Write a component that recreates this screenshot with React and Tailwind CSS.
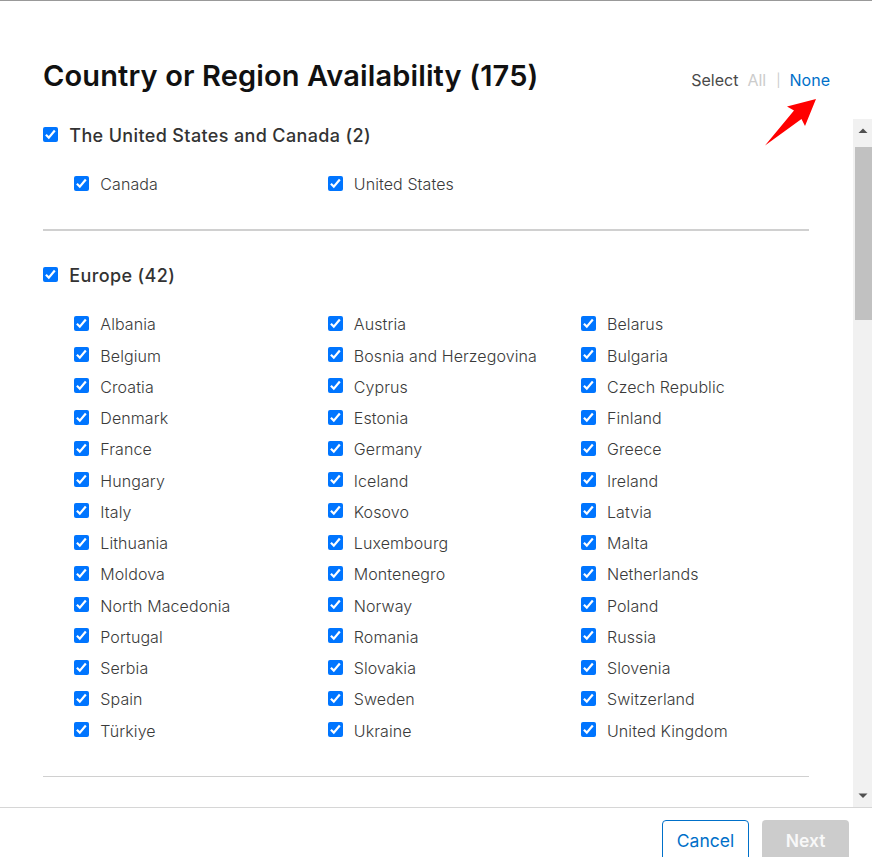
import React from 'react'

const regions = [
  { name: 'The United States and Canada', countries: ['Canada', 'United States'] },
  {
    name: 'Europe',
    countries: [
      'Albania', 'Austria', 'Belarus',
      'Belgium', 'Bosnia and Herzegovina', 'Bulgaria',
      'Croatia', 'Cyprus', 'Czech Republic',
      'Denmark', 'Estonia', 'Finland',
      'France', 'Germany', 'Greece',
      'Hungary', 'Iceland', 'Ireland',
      'Italy', 'Kosovo', 'Latvia',
      'Lithuania', 'Luxembourg', 'Malta',
      'Moldova', 'Montenegro', 'Netherlands',
      'North Macedonia', 'Norway', 'Poland',
      'Portugal', 'Romania', 'Russia',
      'Serbia', 'Slovakia', 'Slovenia',
      'Spain', 'Sweden', 'Switzerland',
      'Türkiye', 'Ukraine', 'United Kingdom',
    ],
  },
]

const Checkbox = () => (
  <svg className="size-[15px] shrink-0" viewBox="0 0 15 15" role="checkbox" aria-checked="true">
    <rect width="15" height="15" rx="2" fill="#0075ff" />
    <path d="M2.9 7.8 5.8 10.6 11.8 3.5" fill="none" stroke="#fff" strokeWidth="2.2" />
  </svg>
)

const Region = ({ name, countries }) => (
  <section className="mb-[28px] border-b border-[#d0d0d0] pb-[30.2px] first:border-b-2">
    <h2 className="flex h-[31px] items-center gap-[11.3px] text-[18px] font-medium tracking-[0.36px] text-[#333]">
      <Checkbox />
      <span className="relative top-px">
        {name} ({countries.length})
      </span>
    </h2>
    <ul className="mt-[17.6px] grid auto-rows-[31.28px] grid-cols-[253.5px_253.2px_1fr] pl-[31px]">
      {countries.map((country) => (
        <li key={country} className="flex items-center gap-[11.3px] text-[16px] font-light tracking-[0.09px] whitespace-nowrap text-[#3a3a3a]">
          <Checkbox />
          <span className="relative top-px">{country}</span>
        </li>
      ))}
    </ul>
  </section>
)

const Scrollbar = () => (
  <div className="flex w-[19px] shrink-0 flex-col items-center bg-[#f1f1f1]">
    <svg className="h-[28px] w-[19px] shrink-0" viewBox="0 0 19 28">
      <path d="M5.5 14 10 9.5 14.5 14Z" fill="#505050" />
    </svg>
    <div className="h-[173px] w-[17px] self-end bg-[#c1c1c1]" />
    <svg className="mt-auto h-[24px] w-[19px] shrink-0" viewBox="0 0 19 24">
      <path d="M5.5 10.5h9L10 15Z" fill="#505050" />
    </svg>
  </div>
)

const App = () => (
  <div className="relative flex h-[857px] w-[872px] flex-col overflow-hidden border-t border-[#999] bg-white font-['Inter',sans-serif]">
    <header className="flex h-[118px] shrink-0 items-start justify-between pr-[42px] pl-[43px]">
      <h1 className="mt-[55px] text-[29px] leading-10 font-semibold tracking-[0.13px] whitespace-nowrap text-[#111]">
        Country or Region Availability (175)
      </h1>
      <div className="mt-[67px] flex text-[16px] leading-6 whitespace-nowrap">
        <span className="text-[#494949]">Select</span>
        <span className="ml-[9px] text-[#ccc]">All</span>
        <span className="ml-[10px] text-[13px] text-[#ccc]">|</span>
        <button className="ml-[9px] text-[#0070c9]">None</button>
      </div>
    </header>

    <main className="flex h-[688px] shrink-0">
      <div className="flex-1 overflow-hidden pr-[44px] pl-[43px]">
        {regions.map((region) => (
          <Region key={region.name} {...region} />
        ))}
      </div>
      <Scrollbar />
    </main>

    <footer className="flex h-[50px] shrink-0 justify-end gap-[13px] border-t border-[#d6d6d6] pt-[12px] pr-[23px] text-[17.5px]">
      <button className="h-[42px] w-[87px] shrink-0 rounded-[4px] border border-[#0070c9] text-[#0070c9]">Cancel</button>
      <button className="h-[42px] w-[87px] shrink-0 rounded-[4px] bg-[#ccc] font-semibold text-[#f8f8f8]">Next</button>
    </footer>

    <svg className="pointer-events-none absolute top-[97px] left-[764px] h-[48px] w-[54px]" viewBox="0 0 54 48">
      <path d="M1 47.5 30 12.5 23 8.5 52 1 41 28 37.5 21Z" fill="#f00" />
    </svg>
  </div>
)

export default App
